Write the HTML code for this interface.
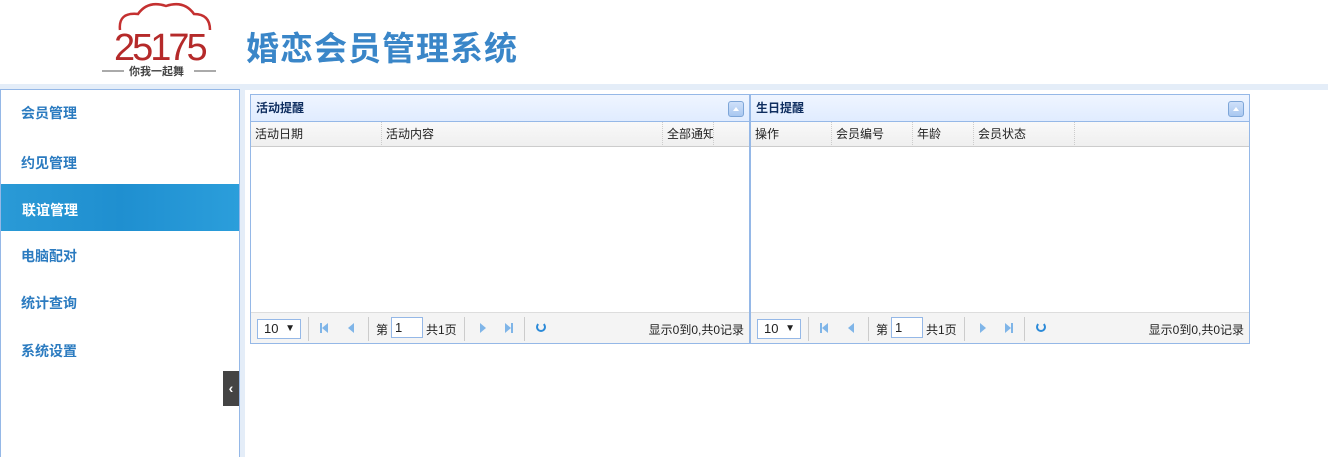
<!DOCTYPE html>
<html><head><meta charset="utf-8"><style>
*{margin:0;padding:0;box-sizing:border-box}
body{width:1328px;height:457px;overflow:hidden;background:#fff;font-family:"Liberation Sans","Noto Sans CJK SC",sans-serif;font-size:12px;color:#222;position:relative}
.abs{position:absolute}
.side{left:0;top:89px;width:240px;height:368px;border:1px solid #95b8e7;border-bottom:none;background:#fff}
.item{position:absolute;left:20px;font-size:14px;color:#2b7bc0;font-weight:bold}
.act{position:absolute;left:0;top:94px;width:238px;height:47px;background:linear-gradient(90deg,#2a9ad6,#1f8fd0 50%,#2b9edb)}
.panel{top:94px;width:500px;height:250px;border:1px solid #95b8e7;background:#fff}
.ph{height:27px;background:linear-gradient(#eff5ff,#e0ecff);border-bottom:1px solid #95b8e7;font-weight:bold;font-size:12px;line-height:26px;padding-left:5px;color:#0e2d5f;position:relative}
.tool{position:absolute;right:5px;top:6px;width:16px;height:16px;border:1px solid #7ea6d8;border-radius:3px;background:linear-gradient(#cfe1fa,#a9c7f0)}
.tool:after{content:"";position:absolute;left:4px;top:5px;border-left:3px solid transparent;border-right:3px solid transparent;border-bottom:4px solid #fff}
.ch{height:25px;background:linear-gradient(#f9f9f9,#efefef);border-bottom:1px solid #ccc;position:relative}
.ch span{position:absolute;top:0;height:25px;line-height:25px;padding-left:4px;border-right:1px dotted #ccc;white-space:nowrap;overflow:hidden}
.pf{position:absolute;left:0;bottom:0;width:498px;height:31px;background:#f4f4f4;border-top:1px solid #ddd}
.pf *{position:absolute}
.sel{left:6px;top:6px;width:44px;height:20px;border:1px solid #95b8e7;background:#fff;line-height:18px;padding-left:6px;font-size:13px}
.sep{top:4px;width:1px;height:24px;background:#ccc}
.tri{top:10px;border-top:5px solid transparent;border-bottom:5px solid transparent}
</style></head><body>
<div class="abs" style="left:0;top:84px;width:1328px;height:6px;background:#e4edf8"></div>
<div class="abs" style="left:240px;top:89px;width:5px;height:368px;background:#e4edf8"></div>
<svg class="abs" style="left:98px;top:0" width="125" height="80">
<path d="M22 30 Q20 12 40 14 Q50 0 68 6 Q86 0 96 14 Q112 14 112 30" fill="none" stroke="#c43030" stroke-width="2.5"/>
<text x="16" y="60" font-family="Liberation Sans" font-size="38" fill="#b52a2a" letter-spacing="-3">25175</text>
<line x1="4" y1="71" x2="26" y2="71" stroke="#555"/><line x1="96" y1="71" x2="118" y2="71" stroke="#555"/>
<text x="31" y="75" font-size="11" font-weight="bold" fill="#444" font-family="Noto Sans CJK SC">你我一起舞</text>
</svg>
<div class="abs" style="left:246px;top:22px;font-size:33px;font-weight:bold;color:#3a86c8;letter-spacing:1px;white-space:nowrap">婚恋会员管理系统</div>
<div class="abs side">
<div class="item" style="top:13px">会员管理</div>
<div class="item" style="top:63px">约见管理</div>
<div class="act"></div>
<div class="item" style="top:110px;color:#fff;left:21px">联谊管理</div>
<div class="item" style="top:156px">电脑配对</div>
<div class="item" style="top:203px">统计查询</div>
<div class="item" style="top:251px">系统设置</div>
</div>
<div class="abs" style="left:223px;top:371px;width:16px;height:35px;background:#444;color:#fff;font-weight:bold;font-size:14px;line-height:35px;text-align:center">‹</div>

<div class="abs panel" style="left:250px">
<div class="ph">活动提醒<div class="tool"></div></div>
<div class="ch"><span style="left:0;width:131px">活动日期</span><span style="left:131px;width:281px">活动内容</span><span style="left:412px;width:51px">全部通知</span></div>
<div class="pf">
<div class="sel">10 <b style="position:absolute;right:5px;font-size:10px">▼</b></div>
<div class="sep" style="left:57px"></div>
<div class="tri" style="left:71px;border-right:6px solid #7fb5e8"></div><div style="left:69px;top:10px;width:2px;height:10px;background:#7fb5e8"></div>
<div class="tri" style="left:97px;border-right:6px solid #7fb5e8"></div>
<div class="sep" style="left:117px"></div>
<div style="left:125px;top:8px">第</div>
<div style="left:140px;top:4px;width:32px;height:21px;border:1px solid #95b8e7;background:#fff;padding-left:3px;line-height:19px;font-size:13px">1</div>
<div style="left:175px;top:8px">共1页</div>
<div class="sep" style="left:213px"></div>
<div class="tri" style="left:229px;border-left:6px solid #7fb5e8"></div>
<div class="tri" style="left:254px;border-left:6px solid #7fb5e8"></div><div style="left:260px;top:10px;width:2px;height:10px;background:#7fb5e8"></div>
<div class="sep" style="left:273px"></div>
<div style="left:285px;top:9px;width:10px;height:10px;border:2px solid #2b8ad8;border-top-color:transparent;border-radius:50%"></div>
<div style="right:5px;top:8px">显示0到0,共0记录</div>
</div>
</div>

<div class="abs panel" style="left:750px">
<div class="ph">生日提醒<div class="tool"></div></div>
<div class="ch"><span style="left:0;width:81px">操作</span><span style="left:81px;width:81px">会员编号</span><span style="left:162px;width:61px">年龄</span><span style="left:223px;width:101px">会员状态</span></div>
<div class="pf">
<div class="sel">10 <b style="position:absolute;right:5px;font-size:10px">▼</b></div>
<div class="sep" style="left:57px"></div>
<div class="tri" style="left:71px;border-right:6px solid #7fb5e8"></div><div style="left:69px;top:10px;width:2px;height:10px;background:#7fb5e8"></div>
<div class="tri" style="left:97px;border-right:6px solid #7fb5e8"></div>
<div class="sep" style="left:117px"></div>
<div style="left:125px;top:8px">第</div>
<div style="left:140px;top:4px;width:32px;height:21px;border:1px solid #95b8e7;background:#fff;padding-left:3px;line-height:19px;font-size:13px">1</div>
<div style="left:175px;top:8px">共1页</div>
<div class="sep" style="left:213px"></div>
<div class="tri" style="left:229px;border-left:6px solid #7fb5e8"></div>
<div class="tri" style="left:254px;border-left:6px solid #7fb5e8"></div><div style="left:260px;top:10px;width:2px;height:10px;background:#7fb5e8"></div>
<div class="sep" style="left:273px"></div>
<div style="left:285px;top:9px;width:10px;height:10px;border:2px solid #2b8ad8;border-top-color:transparent;border-radius:50%"></div>
<div style="right:5px;top:8px">显示0到0,共0记录</div>
</div>
</div>
</body></html>
